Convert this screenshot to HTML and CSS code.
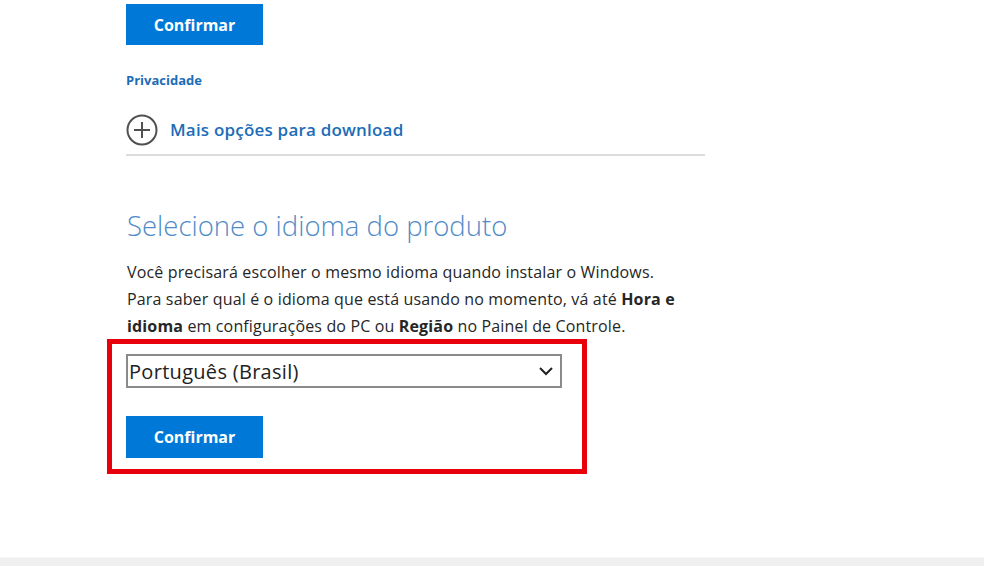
FILE: index.html
```html
<!DOCTYPE html>
<html lang="pt-BR">
<head>
<meta charset="utf-8">
<title>Selecione o idioma do produto</title>
<link rel="stylesheet" href="styles.css">
</head>
<body>
<main class="page">
  <div class="content">
    <button class="btn btn-top" type="button">Confirmar</button>
    <a class="privacy" href="#">Privacidade</a>
    <div class="more">
      <svg class="plus" width="32" height="32" viewBox="0 0 32 32" aria-hidden="true">
        <circle cx="16" cy="16" r="14.5" fill="none" stroke="#505050" stroke-width="2"/>
        <path d="M16 8v16M8 16h16" stroke="#505050" stroke-width="2" fill="none"/>
      </svg>
      <a class="more-link" href="#">Mais opções para download</a>
    </div>
    <h2 class="title">Selecione o idioma do produto</h2>
    <p class="desc">Você precisará escolher o mesmo idioma quando instalar o Windows.<br>Para saber qual é o idioma que está usando no momento, vá até <b>Hora e</b><br><b>idioma</b> em configurações do PC ou <b>Região</b> no Painel de Controle.</p>
    <div class="highlight">
      <div class="select">
        <span class="select-value">Português (Brasil)</span>
        <svg class="chev" width="16" height="10" viewBox="0 0 16 10" aria-hidden="true">
          <path d="M2 2l6 6 6-6" fill="none" stroke="#222" stroke-width="2"/>
        </svg>
      </div>
      <button class="btn btn-bottom" type="button">Confirmar</button>
    </div>
  </div>
  <footer class="footer"></footer>
</main>
</body>
</html>
```
FILE: styles.css
```css
* { box-sizing: border-box; }
html, body { margin: 0; padding: 0; background: #fff; }
body { font-family: "Open Sans", "Noto Sans", "Liberation Sans", sans-serif; color: #222; }
.page { height: 566px; display: flex; flex-direction: column; }
.content { flex: 1; padding: 4px 0 0 126px; width: 705px; display: flex; flex-direction: column; align-items: flex-start; }
.btn {
  width: 137px; height: 41px; border: 0; padding: 0;
  background: #0078d7; color: #fff;
  font-family: "Open Sans", "Noto Sans", sans-serif; font-weight: 700; font-size: 16px; letter-spacing: 0;
}
.privacy { margin-top: 27px; font-size: 13px; font-weight: 700; color: #1c6db8; text-decoration: none; line-height: 16px; }
.more { margin-top: 26px; width: 100%; display: flex; align-items: center; gap: 12px; padding-bottom: 8px; border-bottom: 2px solid #dcdcdc; }
.plus { display: block; }
.more-link { font-size: 17px; font-weight: 600; color: #1c6db8; text-decoration: none; letter-spacing: 0.2px; line-height: 32px; }
.title { margin: 52px 0 0 1px; font-size: 27.5px; font-weight: 300; color: #4f8bc7; line-height: 36px; }
.desc { margin: 15px 0 0 1px; font-size: 16px; line-height: 27px; color: #262626; width: 600px; letter-spacing: 0.15px; }
.desc b { font-weight: 700; }
.highlight { margin: -1px 0 0 -19px; width: 480px; height: 135px; border: 5px solid #e8000b; padding: 10px 0 0 14px; display: flex; flex-direction: column; gap: 28px; }
.select { width: 436px; height: 34px; border: 2px solid #8a8a8a; display: flex; align-items: center; justify-content: space-between; padding: 0 6px 0 1px; }
.select-value { font-size: 20px; color: #222; letter-spacing: 0.3px; }
.chev { display: block; }
.btn-bottom { height: 42px; }
.footer { height: 9px; background: #f0f0f0; border-top: 1px solid #f7f7f7; }
```
